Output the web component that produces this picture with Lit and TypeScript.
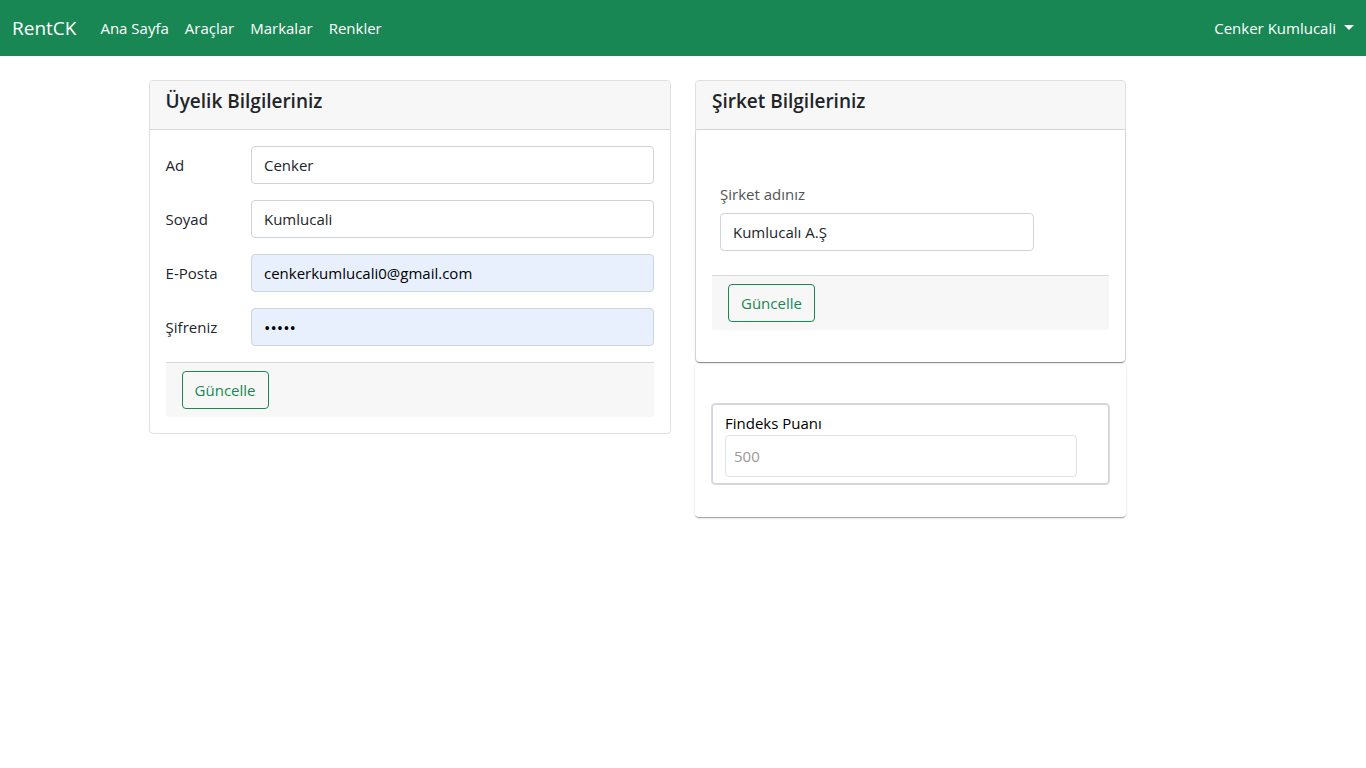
import { LitElement, html, css } from "lit";
import { customElement } from "lit/decorators.js";

@customElement("app-root")
export class AppRoot extends LitElement {
  static styles = css`
    :host {
      display: block;
      min-height: 100vh;
      background: #fff;
      color: #212529;
      font-family: "Segoe UI", "Open Sans", "Noto Sans", sans-serif;
      font-size: 15px;
      line-height: 24px;
    }
    *,
    *::before,
    *::after {
      box-sizing: border-box;
    }
    a {
      color: inherit;
      text-decoration: none;
    }
    .navbar {
      display: flex;
      align-items: center;
      padding: 8px 12px;
      background: #198754;
      color: #fff;
    }
    .brand {
      margin-right: 16px;
      font-size: 19px;
      line-height: 40px;
    }
    .links {
      display: flex;
      flex: 1;
      margin: 0;
      padding: 0;
      list-style: none;
    }
    .links a {
      display: block;
      padding: 8px;
    }
    .user {
      display: flex;
      align-items: center;
      gap: 8px;
      padding: 8px 0;
      border: 0;
      background: none;
      color: inherit;
      font: inherit;
      cursor: pointer;
    }
    .caret {
      margin-bottom: 2px;
      border-top: 5px solid;
      border-left: 5px solid transparent;
      border-right: 5px solid transparent;
    }
    .content {
      display: grid;
      grid-template-columns: repeat(12, minmax(0, 1fr));
      column-gap: 24px;
      align-items: start;
      width: 80%;
      margin: 24px auto;
      padding: 0 12px;
    }
    .member {
      grid-column: span 6;
    }
    .company {
      grid-column: span 5;
    }
    .card {
      border: 1px solid rgba(0, 0, 0, 0.125);
      border-radius: 4px;
    }
    .card-header {
      padding: 8px 16px 16px;
      border-bottom: 1px solid rgba(0, 0, 0, 0.125);
      border-radius: 3px 3px 0 0;
      background: #f7f7f7;
    }
    h5 {
      margin: 0;
      font-size: 19px;
      line-height: 24px;
      font-weight: 600;
    }
    .card-body {
      display: grid;
      gap: 16px;
      padding: 16px;
    }
    .row {
      display: grid;
      grid-template-columns: repeat(12, minmax(0, 1fr));
      column-gap: 24px;
      align-items: center;
    }
    .row label {
      grid-column: span 2;
    }
    .row input {
      grid-column: span 10;
    }
    input {
      display: block;
      width: 100%;
      height: 38px;
      padding: 6px 12px;
      border: 1px solid #ced4da;
      border-radius: 4px;
      background: #fff;
      color: #212529;
      font: inherit;
    }
    .filled {
      background: #e8f0fe;
      color: #000;
    }
    .secret {
      font-size: 17px;
    }
    .card-footer {
      padding: 8px 16px;
      border-top: 1px solid rgba(0, 0, 0, 0.125);
      border-radius: 0 0 3px 3px;
      background: #f7f7f7;
    }
    .button {
      display: block;
      padding: 6px 12px;
      border: 1px solid #198754;
      border-radius: 4px;
      background: transparent;
      color: #198754;
      font: inherit;
      cursor: pointer;
    }
    .sheet {
      border-radius: 4px;
      box-shadow:
        0 2px 1px -1px rgba(0, 0, 0, 0.2),
        0 1px 1px 0 rgba(0, 0, 0, 0.14),
        0 1px 3px 0 rgba(0, 0, 0, 0.12);
    }
    .company-body {
      padding: 52px 16px 32px;
      background: #fff;
    }
    .company-name {
      width: 81%;
      padding: 0 0 24px 8px;
    }
    .company-name label {
      display: block;
      margin-bottom: 7px;
      color: #555;
    }
    .score-sheet {
      padding: 40px 16px 32px;
    }
    .score {
      padding: 7px 32px 7px 13px;
      border: 1px solid #d9dbdd;
      border-radius: 4px;
      box-shadow: inset 0 0 0 1px #ced4da;
    }
    .score label {
      display: block;
      color: #000;
    }
    .score input {
      height: 42px;
      padding: 8px;
      border-color: #dee2e6;
      color: #999;
    }
  `;

  render() {
    return html`
      <nav class="navbar">
        <a class="brand" href="#">RentCK</a>
        <ul class="links">
          <li><a href="#">Ana Sayfa</a></li>
          <li><a href="#">Araçlar</a></li>
          <li><a href="#">Markalar</a></li>
          <li><a href="#">Renkler</a></li>
        </ul>
        <button class="user" type="button">Cenker Kumlucali <span class="caret"></span></button>
      </nav>
      <main class="content">
        <section class="member card">
          <header class="card-header"><h5>Üyelik Bilgileriniz</h5></header>
          <form class="card-body">
            <div class="row">
              <label for="first">Ad</label>
              <input id="first" type="text" value="Cenker" />
            </div>
            <div class="row">
              <label for="last">Soyad</label>
              <input id="last" type="text" value="Kumlucali" />
            </div>
            <div class="row">
              <label for="email">E-Posta</label>
              <input id="email" class="filled" type="email" value="cenkerkumlucali0@gmail.com" />
            </div>
            <div class="row">
              <label for="password">Şifreniz</label>
              <input id="password" class="filled secret" type="password" value="12345" />
            </div>
            <footer class="card-footer">
              <button class="button" type="button">Güncelle</button>
            </footer>
          </form>
        </section>
        <div class="company">
          <section class="card">
            <header class="card-header"><h5>Şirket Bilgileriniz</h5></header>
            <form class="sheet company-body">
              <div class="company-name">
                <label for="company">Şirket adınız</label>
                <input id="company" type="text" value="Kumlucalı A.Ş" />
              </div>
              <footer class="card-footer">
                <button class="button" type="button">Güncelle</button>
              </footer>
            </form>
          </section>
          <section class="sheet score-sheet">
            <div class="score">
              <label for="score">Findeks Puanı</label>
              <input id="score" type="text" value="500" disabled />
            </div>
          </section>
        </div>
      </main>
    `;
  }
}
